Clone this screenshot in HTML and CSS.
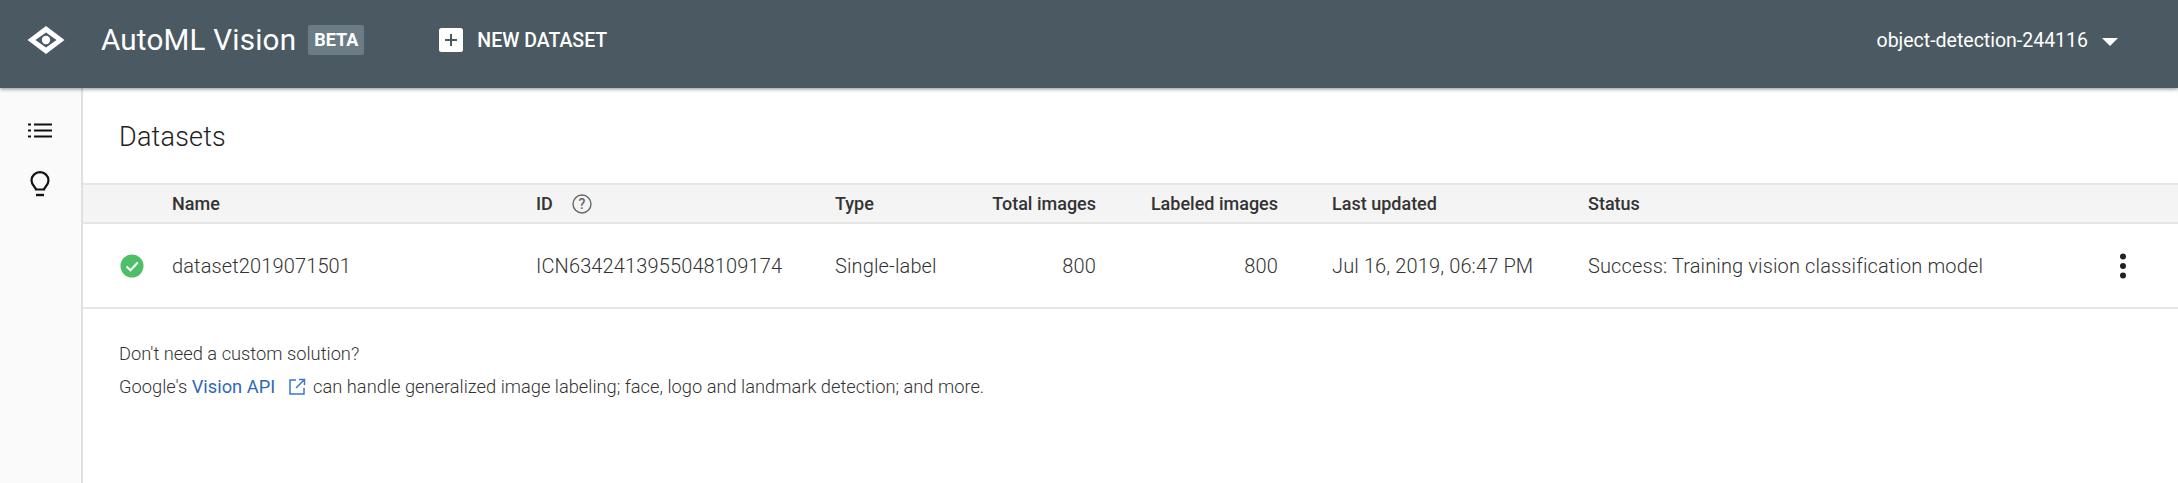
FILE: index.html
```html
<!doctype html>
<html>
  <head>
    <meta charset="UTF-8" />
    <title>AutoML Vision | Datasets</title>
    <link rel="stylesheet" href="styles.css">
  </head>
  <body>
    <header class="topbar">
      <svg class="logo" width="40" height="30" viewBox="0 0 40 30">
        <path d="M20 1 L38.5 15 L20 29 L1.5 15 Z M20 7.5 L9.5 15 L20 22.5 L30.5 15 Z" fill="#fff" fill-rule="evenodd" />
        <circle cx="20" cy="15" r="4.2" fill="#fff" />
      </svg>
      <span class="product">AutoML Vision</span>
      <span class="beta">BETA</span>
      <button class="new-dataset" type="button">
        <svg width="24" height="24" viewBox="0 0 24 24">
          <rect x="0" y="0" width="24" height="24" rx="2.5" fill="#fff" />
          <path d="M12 6 V18 M6 12 H18" stroke="#4b5a62" stroke-width="2" />
        </svg>
        NEW DATASET
      </button>
      <div class="project">
        <span>object-detection-244116</span>
        <span class="caret"></span>
      </div>
    </header>

    <div class="layout">
      <nav class="sidebar">
        <svg width="24" height="16" viewBox="0 0 24 16">
          <path d="M0 1.5 H3 M0 7.5 H3 M0 13.5 H3 M6 1.5 H24 M6 7.5 H24 M6 13.5 H24" stroke="#111" stroke-width="2.2" fill="none" />
        </svg>
        <svg width="20" height="26" viewBox="0 0 20 26">
          <path d="M6 18.5 C6 16.5 1.5 14.5 1.5 9.5 C1.5 4.8 5.3 1.2 10 1.2 C14.7 1.2 18.5 4.8 18.5 9.5 C18.5 14.5 14 16.5 14 18.5 Z" fill="none" stroke="#111" stroke-width="2.2" />
          <path d="M6 24 H14" stroke="#111" stroke-width="2.4" />
        </svg>
      </nav>

      <main class="content">
        <h1 class="title">Datasets</h1>

        <div class="row row-head">
          <span></span>
          <span>Name</span>
          <span class="id-head">ID
            <svg width="20" height="20" viewBox="0 0 20 20">
              <circle cx="10" cy="10" r="9" fill="none" stroke="#666" stroke-width="1.4" />
              <text x="10" y="14.6" text-anchor="middle" class="help-mark">?</text>
            </svg>
          </span>
          <span>Type</span>
          <span class="num">Total images</span>
          <span class="num">Labeled images</span>
          <span class="date">Last updated</span>
          <span>Status</span>
          <span></span>
        </div>

        <div class="row row-body">
          <svg width="24" height="24" viewBox="0 0 24 24">
            <circle cx="12" cy="12" r="11.5" fill="#4fbf67" />
            <path d="M6.5 12.5 L10.5 16.3 L17.8 8.5" fill="none" stroke="#fff" stroke-width="2" />
          </svg>
          <span>dataset2019071501</span>
          <span>ICN6342413955048109174</span>
          <span>Single-label</span>
          <span class="num">800</span>
          <span class="num">800</span>
          <span class="date">Jul 16, 2019, 06:47 PM</span>
          <span>Success: Training vision classification model</span>
          <svg class="more" width="8" height="26" viewBox="0 0 8 26">
            <circle cx="4" cy="3.5" r="3" fill="#212121" />
            <circle cx="4" cy="13" r="3" fill="#212121" />
            <circle cx="4" cy="22.5" r="3" fill="#212121" />
          </svg>
        </div>

        <div class="note">
          <p>Don't need a custom solution?</p>
          <p>Google's <a href="#">Vision API</a>
            <svg class="external" width="18" height="18" viewBox="0 0 18 18">
              <path d="M8 2 H2 V16 H16 V10 M11 1.5 H16.5 V7 M16.5 1.5 L8 10" fill="none" stroke="#3a78d0" stroke-width="1.5" />
            </svg>
            can handle generalized image labeling; face, logo and landmark detection; and more.</p>
        </div>
      </main>
    </div>
  </body>
</html>
```

FILE: styles.css
```css
* {
  margin: 0;
  padding: 0;
  box-sizing: border-box;
}

body {
  height: 483px;
  overflow: hidden;
  font-family: Roboto, "Liberation Sans", sans-serif;
  font-size: 18px;
  color: #333;
  background: #fff;
}

.topbar {
  position: relative;
  display: flex;
  align-items: center;
  height: 88px;
  padding: 0 60px 8px 26px;
  color: #fff;
  background: #4b5a62;
  box-shadow: 0 1px 4px rgba(0, 0, 0, 0.45);
}

.product {
  margin-left: 35px;
  font-size: 29.6px;
  letter-spacing: 0.2px;
}

.beta {
  margin-left: 12px;
  padding: 0 6px;
  line-height: 30px;
  font-size: 18px;
  font-weight: 700;
  border-radius: 2px;
  background: #6c7c84;
}

.new-dataset {
  display: flex;
  align-items: center;
  gap: 14px;
  margin-left: 75px;
  font: 500 19.5px Roboto, sans-serif;
  color: #fff;
  background: none;
  border: 0;
}

.project {
  display: flex;
  align-items: center;
  gap: 14px;
  margin-left: auto;
  font-size: 19.5px;
}

.caret {
  width: 0;
  height: 0;
  border-left: 8px solid transparent;
  border-right: 8px solid transparent;
  border-top: 8px solid #fff;
  margin-top: 3px;
}

.layout {
  display: flex;
  height: 395px;
}

.sidebar {
  display: flex;
  flex-direction: column;
  align-items: center;
  gap: 32px;
  flex: none;
  width: 83px;
  padding: 35px 2px 0 0;
  background: #fafafa;
  border-right: 2px solid #e0e0e0;
}

.content {
  flex: 1;
}

.title {
  height: 95px;
  padding: 33px 0 0 36px;
  font-size: 27px;
  font-weight: 300;
  letter-spacing: 0.2px;
  color: #212121;
}

.row {
  display: grid;
  grid-template-columns: 89px 364px 299px 130px 131px 182px 310px 512px 78px;
  align-items: center;
  border-bottom: 2px solid #e6e6e6;
}

.row-head {
  height: 41px;
  font-weight: 500;
  font-size: 18px;
  color: #333;
  background: #f4f4f4;
  border-top: 2px solid #e6e6e6;
}

.row-body {
  height: 85px;
  font-weight: 300;
  font-size: 20px;
  letter-spacing: 0.13px;
}

.row-body > svg:first-child {
  margin-left: 37px;
}

.id-head {
  display: flex;
  align-items: center;
  gap: 19px;
}

.help-mark {
  font-size: 14px;
  fill: #666;
}

.num {
  text-align: right;
}

.date {
  padding-left: 54px;
}

.more {
  margin-left: 19px;
}

.note {
  display: flex;
  flex-direction: column;
  gap: 12px;
  padding: 34px 0 0 36px;
  font-weight: 300;
  font-size: 18.3px;
  line-height: 21px;
}

.note a {
  color: #2f68b5;
  font-weight: 400;
  text-decoration: none;
}

.external {
  margin: 0 3px 0 8px;
  vertical-align: -3px;
}
```
